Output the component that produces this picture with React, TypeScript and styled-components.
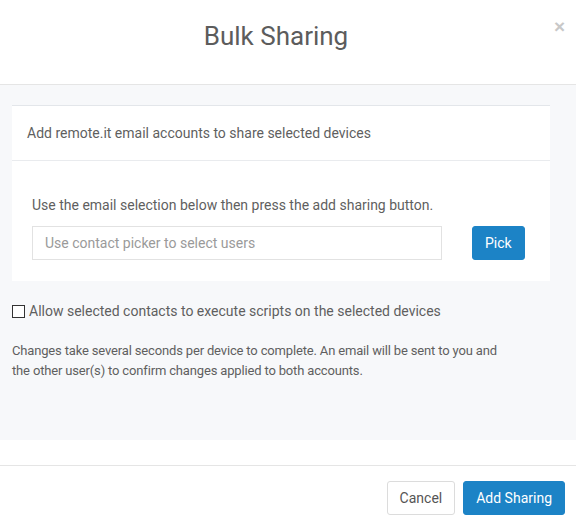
import React from "react";
import styled, { createGlobalStyle } from "styled-components";

const Global = createGlobalStyle`
  html, body { margin: 0; padding: 0; background: #fff; }
  body { font-family: Roboto, "Liberation Sans", Arial, sans-serif; font-size: 14px; color: #5f5f5f; }
  * { box-sizing: border-box; }
`;

const Modal = styled.div`
  width: 576px;
  height: 523px;
  overflow: hidden;
  background: #fff;
  display: flex;
  flex-direction: column;
`;

const Header = styled.div`
  position: relative;
  height: 85px;
  border-bottom: 1px solid #e5e5e5;
  display: flex;
  align-items: center;
  justify-content: center;
  padding: 0 24px 12px 0;
`;

const Title = styled.h1`
  margin: 0;
  font-size: 26px;
  font-weight: 400;
  color: #5c5c5c;
  line-height: 30px;
`;

const Close = styled.button`
  position: absolute;
  top: 17px;
  right: 11px;
  border: 0;
  background: none;
  padding: 0;
  font-size: 19px;
  font-weight: 700;
  line-height: 20px;
  color: #c8c8c8;
  font-family: "Liberation Sans", Arial, sans-serif;
  cursor: pointer;
`;

const BodyWrap = styled.div`
  padding-bottom: 25px;
  border-bottom: 1px solid #e5e5e5;
`;

const Body = styled.div`
  background: #f7f8fa;
  height: 355px;
  padding: 20px 26px 0 12px;
`;

const Card = styled.div`
  background: #fff;
  border-top: 1px solid #e3e6ea;
`;

const CardHeader = styled.div`
  padding: 17px 15px;
  line-height: 20px;
  border-bottom: 1px solid #e9ebee;
`;

const CardBody = styled.div`
  padding: 34px 25px 21px 20px;
`;

const Hint = styled.div`
  line-height: 20px;
  margin-bottom: 11px;
`;

const PickRow = styled.div`
  display: flex;
  align-items: center;
  gap: 30px;
`;

const Input = styled.input`
  width: 410px;
  height: 34px;
  border: 1px solid #e2e2e2;
  border-radius: 0;
  padding: 0 12px;
  font-family: inherit;
  font-size: 14px;
  color: #555;
  outline: none;
  &::placeholder { color: #9a9a9a; }
`;

const Button = styled.button<{ $primary?: boolean }>`
  height: 34px;
  padding: 0 12px;
  border-radius: 3px;
  font-family: inherit;
  font-size: 14px;
  cursor: pointer;
  border: 1px solid ${(p) => (p.$primary ? "#1c83c6" : "#dcdcdc")};
  background: ${(p) => (p.$primary ? "#1c83c6" : "#fff")};
  color: ${(p) => (p.$primary ? "#fff" : "#555")};
`;

const CheckRow = styled.label`
  display: flex;
  align-items: center;
  gap: 4px;
  margin-top: 20px;
  line-height: 20px;
`;

const Box = styled.span`
  width: 13px;
  height: 13px;
  border: 1px solid #333;
  background: #fff;
  display: inline-block;
`;

const Note = styled.p`
  margin: 20px 0 0;
  font-size: 13px;
  letter-spacing: -0.16px;
  line-height: 20px;
  width: 505px;
`;

const Footer = styled.div`
  display: flex;
  justify-content: flex-end;
  gap: 8px;
  padding: 15px 11px 0 0;
`;

export default function App() {
  return (
    <>
      <Global />
      <Modal>
        <Header>
          <Title>Bulk Sharing</Title>
          <Close aria-label="close">×</Close>
        </Header>
        <BodyWrap>
          <Body>
            <Card>
              <CardHeader>Add remote.it email accounts to share selected devices</CardHeader>
              <CardBody>
                <Hint>Use the email selection below then press the add sharing button.</Hint>
                <PickRow>
                  <Input placeholder="Use contact picker to select users" />
                  <Button $primary>Pick</Button>
                </PickRow>
              </CardBody>
            </Card>
            <CheckRow>
              <Box />
              Allow selected contacts to execute scripts on the selected devices
            </CheckRow>
            <Note>
              Changes take several seconds per device to complete. An email will be sent to you and the other user(s) to confirm changes applied to both accounts.
            </Note>
          </Body>
        </BodyWrap>
        <Footer>
          <Button>Cancel</Button>
          <Button $primary>Add Sharing</Button>
        </Footer>
      </Modal>
    </>
  );
}
